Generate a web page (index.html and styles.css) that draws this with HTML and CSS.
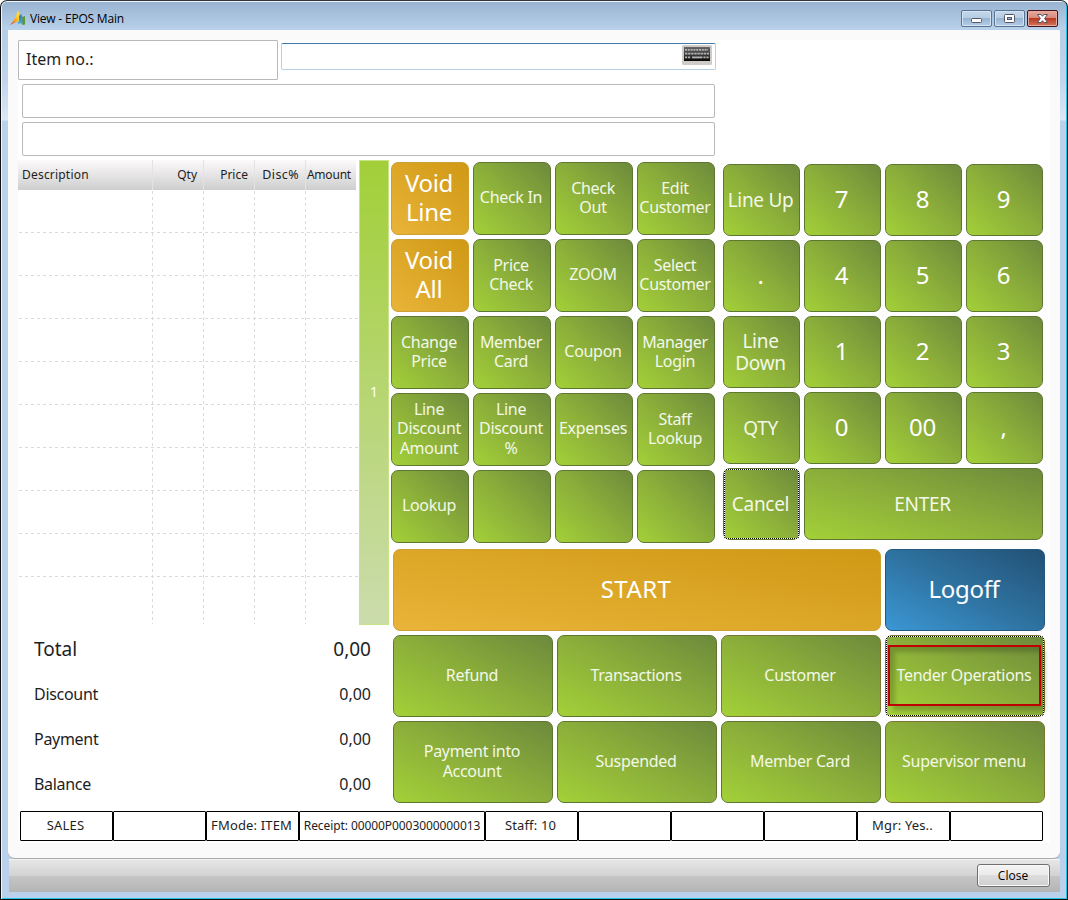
FILE: index.html
```html
<!DOCTYPE html>
<html lang="en">
  <head>
    <meta charset="UTF-8" />
    <meta name="viewport" content="width=device-width, initial-scale=1.0" />
    <title>View - EPOS Main</title>
    <link rel="stylesheet" href="styles.css">
  </head>

  <body>
    <div class="window">
      <!-- Title bar -->
      <div class="titlebar">
        <svg class="app-icon" width="16" height="16" viewBox="0 0 16 16">
          <defs>
            <linearGradient id="sail" x1="0" y1="1" x2="1" y2="0">
              <stop offset="0" stop-color="#d8231c" />
              <stop offset="0.35" stop-color="#f58a1a" />
              <stop offset="0.7" stop-color="#ffd02a" />
              <stop offset="1" stop-color="#ffe04a" />
            </linearGradient>
            <linearGradient id="bar" x1="0" y1="0" x2="0" y2="1">
              <stop offset="0" stop-color="#2a6fae" />
              <stop offset="1" stop-color="#4cb0dc" />
            </linearGradient>
          </defs>
          <path d="M0 15 C4 11 6 7 7.5 1.5 L9 1.5 L9 11 C6 12 3 13.5 0 15 Z" fill="url(#sail)" />
          <path d="M9 6 L11.5 4 L11.5 13 L8 14 L8 12 L9 11.5 Z" fill="url(#bar)" />
          <path d="M12.3 7 L15 6 L15 14.5 L12.3 15 Z" fill="#579a35" />
          <path d="M11.5 5 L12.3 7 L12.3 15 L11.5 13 Z" fill="#2d6f93" />
        </svg>
        <span class="title">View - EPOS Main</span>
        <div class="window-buttons">
          <button class="win-btn" aria-label="Minimize">
            <svg width="29" height="15" viewBox="0 0 29 15">
              <rect x="9.5" y="7.5" width="10" height="4" rx="1" fill="#fff" stroke="#535666" />
            </svg>
          </button>
          <button class="win-btn" aria-label="Maximize">
            <svg width="29" height="15" viewBox="0 0 29 15">
              <rect x="9.5" y="3.5" width="10" height="8" rx="1" fill="#fff" stroke="#535666" />
              <rect x="12.5" y="6.5" width="4" height="2" fill="#9fb9d3" stroke="#535666" />
            </svg>
          </button>
          <button class="win-btn win-close" aria-label="Close window">
            <svg width="29" height="15" viewBox="0 0 29 15">
              <path d="M9.5 3.5 H13 L14.5 5.3 L16 3.5 H19.5 L16.6 7.5 L19.5 11.5 H16 L14.5 9.7 L13 11.5 H9.5 L12.4 7.5 Z" fill="#fff" stroke="#535666" />
            </svg>
          </button>
        </div>
      </div>

      <div class="content">
        <div class="pos">
          <!-- Item entry -->
          <div class="entry">
            <div class="item-label">Item no.:</div>
            <div class="item-input">
              <svg class="keyboard" width="30" height="20" viewBox="0 0 30 20">
                <defs>
                  <linearGradient id="kbd" x1="0" y1="0" x2="0" y2="1">
                    <stop offset="0" stop-color="#666" />
                    <stop offset="0.7" stop-color="#2c2c2c" />
                    <stop offset="1" stop-color="#050505" />
                  </linearGradient>
                </defs>
                <rect width="30" height="20" rx="1.5" fill="#cfccc8" />
                <rect x="2" y="2" width="26" height="14" fill="url(#kbd)" />
                <g stroke="#b4b4b4" stroke-width="1.8">
                  <path d="M3 4.8 H26" stroke-dasharray="2 0.8" />
                  <path d="M3 8.6 H27" stroke-dasharray="2.4 0.7" />
                  <path d="M3 12.4 H9" stroke-dasharray="2.2 0.8" />
                  <path d="M10 12.4 H20.5" />
                  <path d="M21.4 12.4 H27" stroke-dasharray="2.2 0.8" />
                </g>
              </svg>
            </div>
          </div>
          <div class="info-line"></div>
          <div class="info-line"></div>

          <div class="work">
            <div class="left">
              <!-- Receipt lines -->
              <div class="journal">
                <div class="lines">
                  <div class="lines-head">
                    <span class="col-desc">Description</span>
                    <span>Qty</span>
                    <span>Price</span>
                    <span class="col-disc">Disc%</span>
                    <span class="col-amount">Amount</span>
                  </div>
                  <div class="lines-body">
                    <div class="row"></div>
                    <div class="row"></div>
                    <div class="row"></div>
                    <div class="row"></div>
                    <div class="row"></div>
                    <div class="row"></div>
                    <div class="row"></div>
                    <div class="row"></div>
                    <div class="row"></div>
                    <div class="row row-last"></div>
                  </div>
                </div>
                <div class="page-bar">1</div>
              </div>

              <div class="totals">
                <div class="total-row total-main"><span>Total</span><span>0,00</span></div>
                <div class="total-row"><span>Discount</span><span>0,00</span></div>
                <div class="total-row"><span>Payment</span><span>0,00</span></div>
                <div class="total-row"><span>Balance</span><span>0,00</span></div>
              </div>
            </div>

            <div class="right">
              <div class="pads">
                <!-- Function keys -->
                <div class="functions">
                  <button class="key orange big">Void<br>Line</button>
                  <button class="key">Check In</button>
                  <button class="key">Check<br>Out</button>
                  <button class="key">Edit<br>Customer</button>
                  <button class="key orange big">Void<br>All</button>
                  <button class="key">Price<br>Check</button>
                  <button class="key">ZOOM</button>
                  <button class="key">Select<br>Customer</button>
                  <button class="key">Change<br>Price</button>
                  <button class="key">Member<br>Card</button>
                  <button class="key">Coupon</button>
                  <button class="key">Manager<br>Login</button>
                  <button class="key">Line<br>Discount<br>Amount</button>
                  <button class="key">Line<br>Discount<br>%</button>
                  <button class="key">Expenses</button>
                  <button class="key">Staff<br>Lookup</button>
                  <button class="key">Lookup</button>
                  <button class="key"></button>
                  <button class="key"></button>
                  <button class="key"></button>
                </div>

                <!-- Number pad -->
                <div class="numpad">
                  <button class="key medium">Line Up</button>
                  <button class="key digit">7</button>
                  <button class="key digit">8</button>
                  <button class="key digit">9</button>
                  <button class="key digit">.</button>
                  <button class="key digit">4</button>
                  <button class="key digit">5</button>
                  <button class="key digit">6</button>
                  <button class="key medium">Line<br>Down</button>
                  <button class="key digit">1</button>
                  <button class="key digit">2</button>
                  <button class="key digit">3</button>
                  <button class="key medium">QTY</button>
                  <button class="key digit">0</button>
                  <button class="key digit">00</button>
                  <button class="key digit">,</button>
                  <button class="key medium focused">Cancel</button>
                  <button class="key medium enter">ENTER</button>
                </div>
              </div>

              <!-- Main menu -->
              <div class="menu">
                <button class="key orange big start">START</button>
                <button class="key blue big">Logoff</button>
                <button class="key">Refund</button>
                <button class="key">Transactions</button>
                <button class="key brown">Customer</button>
                <button class="key brown focused marked">Tender Operations</button>
                <button class="key">Payment into<br>Account</button>
                <button class="key">Suspended</button>
                <button class="key">Member Card</button>
                <button class="key brown">Supervisor menu</button>
              </div>
            </div>
          </div>

          <!-- Status bar -->
          <div class="status">
            <div>SALES</div>
            <div></div>
            <div>FMode: ITEM</div>
            <div class="receipt">Receipt: 00000P0003000000013</div>
            <div>Staff: 10</div>
            <div></div>
            <div></div>
            <div></div>
            <div>Mgr: Yes..</div>
            <div></div>
          </div>
        </div>
      </div>

      <div class="footer">
        <button class="close-btn">Close</button>
      </div>
    </div>
  </body>
</html>
```
FILE: styles.css
```css
*,
*::before,
*::after {
  box-sizing: border-box;
}

body {
  margin: 0;
  background-color: #fff;
  font-family: "Noto Sans", "DejaVu Sans", sans-serif;
  color: #1e1e1e;
}

button {
  font-family: inherit;
  padding: 0;
}

.window {
  width: 1068px;
  height: 900px;
  padding: 1px 7px 6px 7px;
  border: 1px solid #111;
  border-top-color: #33333b;
  border-radius: 7px 7px 0 0;
  background: linear-gradient(#99b4d1 0, #b5cde6 30px, #c0d5ec 80px, #dbe7f5 119px, #b9d1ea 120px);
  box-shadow: inset 1px 1px 0 #eef5fc, inset -1px -1px 0 #23c4e6;
}

/* Title bar */
.titlebar {
  display: flex;
  height: 28px;
  margin: 0 -6px;
  padding: 0 8px 0 7px;
  background: linear-gradient(#99b4d1, #b9d1ea);
  border-radius: 5px 5px 0 0;
}

.app-icon {
  margin: 8px 4px 0 1px;
}

.title {
  padding-top: 9px;
  font-family: "Open Sans", "Noto Sans", sans-serif;
  font-size: 12px;
  line-height: 16px;
  letter-spacing: -0.2px;
  color: #000;
}

.window-buttons {
  display: flex;
  gap: 2px;
  margin: 8px 0 0 auto;
}

.win-btn {
  width: 31px;
  height: 17px;
  border: 1px solid #5a7390;
  border-radius: 2px;
  background: linear-gradient(#c5d8ec 0, #b6cce3 48%, #98b3cf 50%, #b4cee8 100%);
  box-shadow: inset 0 0 0 1px #d5e4f3;
}

.win-btn svg {
  display: block;
}

.win-close {
  border-color: #43141a;
  background: linear-gradient(#e6aa9f 0, #d88879 48%, #b93a22 50%, #d0765c 100%);
  box-shadow: inset 0 0 0 1px #e7a99d;
}

.content {
  height: 829px;
  padding: 10px;
  background-color: #fafafa;
  border-bottom: 1px solid #aaa;
  border-radius: 0 0 7px 7px;
}

.pos {
  width: 1032px;
  height: 803px;
  background-color: #fff;
}

/* Item entry */
.entry {
  display: flex;
  gap: 3px;
  height: 44px;
}

.item-label {
  width: 260px;
  height: 40px;
  padding-left: 7px;
  border: 1px solid #b9b9b9;
  border-radius: 1px;
  font-size: 16px;
  line-height: 37px;
}

.item-input {
  width: 435px;
  height: 27px;
  margin-top: 3px;
  padding: 1px 3px;
  border: 1px solid #b5cfe7;
  border-top-color: #3d7bad;
  border-radius: 2px;
}

.keyboard {
  display: block;
  margin-left: auto;
}

.info-line {
  width: 693px;
  height: 34px;
  margin: 0 0 4px 4px;
  border: 1px solid #b9b9b9;
  border-radius: 2px;
}

.work {
  display: flex;
  height: 651px;
}

.left {
  width: 373px;
}

.journal {
  display: flex;
  height: 465px;
}

.lines {
  width: 341px;
}

.lines-head {
  display: grid;
  grid-template-columns: 134px 51px 51px 51px 51px;
  width: 338px;
  height: 30px;
  background: linear-gradient(#fcfafa, #e4e2e2 55%, #cecece);
  font-size: 12px;
  line-height: 29px;
}

.lines-head span {
  padding-right: 6px;
  border-left: 1px solid #e4e3e3;
  text-align: right;
  white-space: nowrap;
}

.lines-head .col-desc {
  padding-left: 4px;
  border-left: 0;
  letter-spacing: 0.2px;
  text-align: left;
}

.lines-head .col-disc {
  font-size: 12.5px;
  letter-spacing: 0.4px;
}

.lines-head .col-amount {
  padding-right: 5px;
  letter-spacing: -0.2px;
}

/* Dashed column separators */
.lines-body {
  height: 434px;
  background-image:
    repeating-linear-gradient(#fff 0 1px, transparent 1px 4px, #fff 4px 6px),
    linear-gradient(90deg, transparent 134px, #dadada 134px 135px, transparent 135px 185px, #dadada 185px 186px, transparent 186px 236px, #dadada 236px 237px, transparent 237px 287px, #dadada 287px 288px, transparent 288px);
}

.row {
  height: 43px;
  background: repeating-linear-gradient(90deg, transparent 0 1px, #dadada 1px 4px, transparent 4px 6px) left bottom / 100% 1px no-repeat;
}

.row-last {
  background: none;
}

.page-bar {
  width: 30px;
  border: 1px solid #c8e286;
  background: linear-gradient(#a2cf38, #cbdcac);
  color: #fff;
  font-size: 14px;
  line-height: 461px;
  text-align: center;
}

/* Totals */
.totals {
  padding: 2px 20px 0 16px;
}

.total-row {
  display: flex;
  justify-content: space-between;
  height: 45px;
  font-size: 16px;
  line-height: 44px;
  letter-spacing: -0.3px;
}

.total-row span:last-child {
  letter-spacing: 0;
}

.total-main {
  font-size: 19px;
  letter-spacing: 0;
}

.right {
  width: 659px;
}

.pads {
  display: flex;
  gap: 8px;
  padding-top: 2px;
}

.functions {
  display: grid;
  grid-template-columns: repeat(4, 78px);
  grid-auto-rows: 73px;
  gap: 4px;
}

.numpad {
  display: grid;
  grid-template-columns: repeat(4, 77px);
  grid-auto-rows: 72px;
  gap: 4px;
  padding-top: 2px;
}

.menu {
  display: grid;
  grid-template-columns: repeat(4, 160px);
  grid-auto-rows: 82px;
  gap: 4px;
  padding: 6px 0 0 2px;
}

.key {
  position: relative;
  padding: 0 2px 1px 0;
  border: 1px solid #5d7730;
  border-radius: 7px;
  background: linear-gradient(to top right, #a4d138, #8bae3a 50%, #6c893c);
  background-origin: border-box;
  color: #f3f8e8;
  font-size: 16px;
  line-height: 19.3px;
  letter-spacing: -0.3px;
  white-space: nowrap;
}

.medium {
  font-size: 19px;
  line-height: 22px;
}

.digit,
.big {
  padding-bottom: 4px;
  color: #fff;
  font-size: 24px;
  line-height: 29px;
}

.orange {
  border-color: #cda034;
  background: linear-gradient(to top right, #e9b439, #cf9814);
  background-origin: border-box;
}

.blue {
  border-color: #22587f;
  background: linear-gradient(to top right, #3b98d5, #2e72a0 50%, #225073);
  background-origin: border-box;
}

.brown {
  border-color: #7d7530;
}

.enter {
  grid-column: span 3;
}

.start {
  grid-column: span 3;
  letter-spacing: 0.4px;
}

/* Keyboard focus marker */
.focused::before {
  content: "";
  position: absolute;
  inset: 0;
  border-radius: 3px;
  background:
    repeating-linear-gradient(90deg, #000 0 1px, #fff 1px 2px) top / 100% 1px no-repeat,
    repeating-linear-gradient(90deg, #000 0 1px, #fff 1px 2px) bottom / 100% 1px no-repeat,
    repeating-linear-gradient(#000 0 1px, #fff 1px 2px) left / 1px 100% no-repeat,
    repeating-linear-gradient(#000 0 1px, #fff 1px 2px) right / 1px 100% no-repeat;
}

.marked::after {
  content: "";
  position: absolute;
  left: 2px;
  top: 9px;
  width: 153px;
  height: 61px;
  border: 2px solid #c00000;
  box-shadow: 5px 5px 4px rgba(0, 0, 0, 0.18), inset 5px 5px 4px rgba(0, 0, 0, 0.18);
}

/* Status bar */
.status {
  display: grid;
  grid-template-columns: 93px 93px 93px 186px repeat(6, 93px);
  width: 1023px;
  height: 30px;
  margin-left: 2px;
}

.status div {
  padding-right: 2px;
  border: 1px solid #000;
  border-radius: 1px;
  font-size: 13px;
  line-height: 27px;
  letter-spacing: 0.15px;
  text-align: center;
  white-space: nowrap;
}

.status .receipt {
  padding-right: 0;
  font-size: 12px;
  letter-spacing: -0.08px;
}

/* Footer */
.footer {
  display: flex;
  justify-content: flex-end;
  height: 33px;
  margin: 0 0 0 1px;
  padding: 4px 10px 0 0;
  border-top: 1px solid #f4f4f4;
  background: linear-gradient(#e6e6e6 0, #d2d2d2 50%, #c5c5c5 50%, #b5b5b5 100%);
}

.close-btn {
  width: 73px;
  height: 23px;
  padding-right: 1px;
  border: 1px solid #707070;
  border-radius: 3px;
  background: linear-gradient(#f3f3f3 0, #ebebeb 50%, #dddddd 50%, #cfcfcf 100%);
  box-shadow: inset 0 0 0 1px #fafafa;
  font-family: "Open Sans", "Noto Sans", sans-serif;
  font-size: 12px;
  color: #000;
}
```
